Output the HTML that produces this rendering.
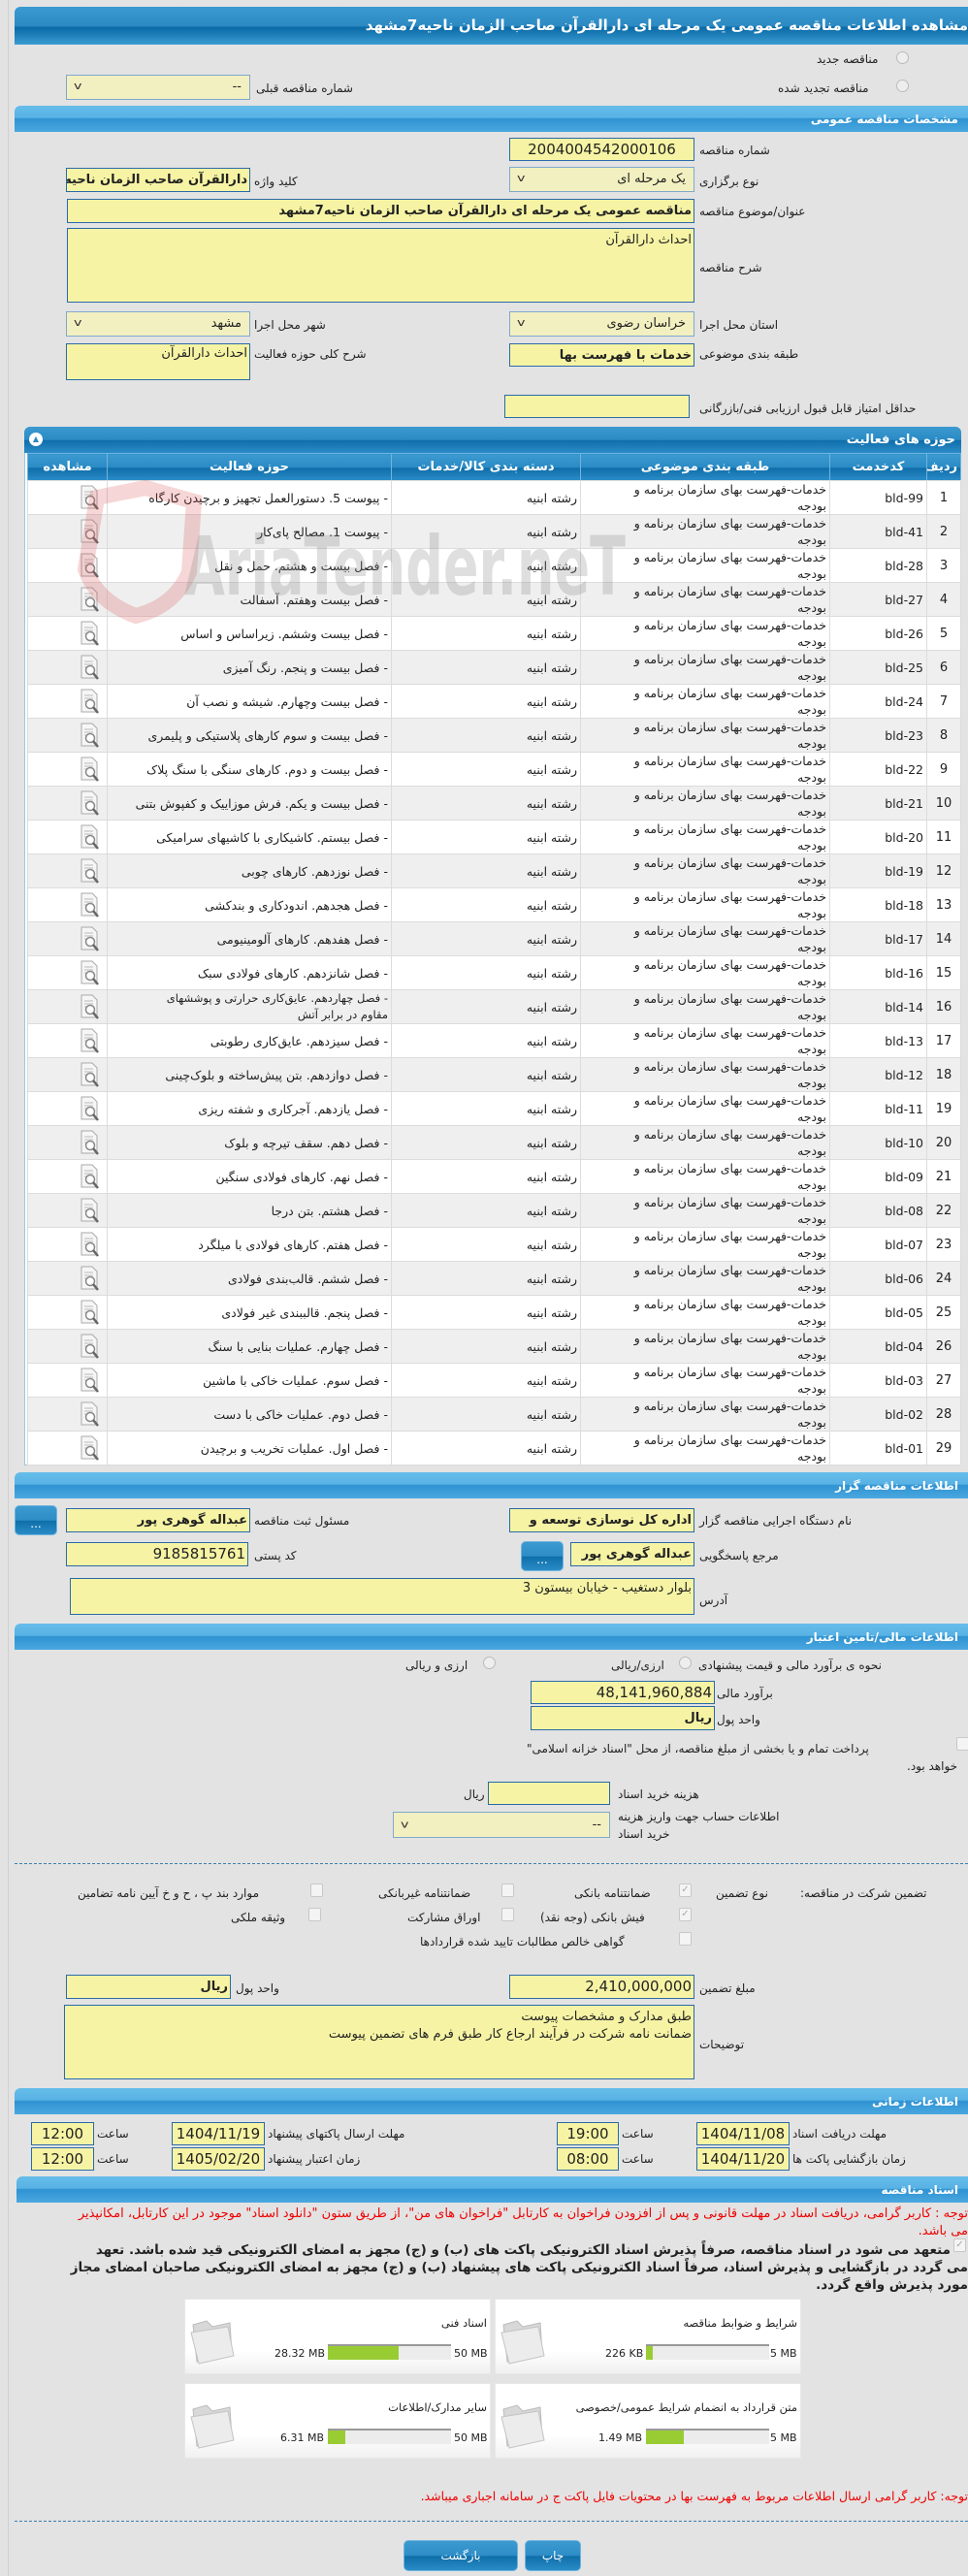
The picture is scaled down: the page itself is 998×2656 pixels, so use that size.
<!DOCTYPE html>
<html><head><meta charset="utf-8">
<style>
*{box-sizing:border-box;margin:0;padding:0}
body{width:998px;height:2656px;background:#e3e3e3;font-family:"DejaVu Sans","Liberation Sans",sans-serif;font-size:12px;color:#222;position:relative;overflow:hidden}
.a{position:absolute}
.lb{position:absolute;direction:rtl;white-space:nowrap;font-size:12px;line-height:16px}
.in{position:absolute;background:#f6f4a4;border:1px solid #2a6aa8;direction:rtl;text-align:right;white-space:nowrap;overflow:hidden;padding:0 2px;font-size:13px}
.sel{position:absolute;background:#f2f0c0;border:1px solid #7fa8cc;direction:rtl;text-align:right;white-space:nowrap;overflow:hidden;padding:0 8px;font-size:13px}
.sel:after{content:"v";position:absolute;left:8px;top:50%;transform:translateY(-55%) scaleX(1.3);font-size:11px;color:#333}
.hd{position:absolute;left:15px;width:983px;height:27px;background:linear-gradient(#66bdea 0%,#58b2e4 45%,#2f92d2 50%,#4aa8df 100%);color:#fff;font-weight:bold;font-size:12px;direction:rtl;text-align:right;padding:7px 10px 0 0;border-radius:6px 0 0 0}
.btn{position:absolute;background:linear-gradient(#3c9ad0 0%,#2e8dc6 50%,#0e6ea8 52%,#2a8cc8 100%);border:1px solid #6fb4de;border-radius:5px;color:#fff;text-align:center;font-size:12px}
.rd{position:absolute;width:13px;height:13px;border-radius:50%;border:1px solid #bbb;background:#eee}
.cb{position:absolute;width:13px;height:14px;border:1px solid #c8c8c8;background:#f4f4f4;border-radius:2px;font-size:10px;color:#aaa;line-height:12px;text-align:center}
table{border-collapse:collapse;table-layout:fixed;direction:rtl}
td,th{border:1px solid #dcdcdc;font-size:12.5px;height:35px;padding:0 3px;text-align:right;line-height:17px;overflow:hidden}
th{background:linear-gradient(#3c9ad0 0%,#2a8ac4 50%,#0f6eaa 52%,#2b8cc8 100%);color:#fff;height:28px;text-align:center;font-weight:bold;border-color:#6fb4de;font-size:13px}
tr.g td{background:#efefef}
tr.w td{background:#fff}
td.c{text-align:center;font-size:13px}
td.ic{text-align:right;padding:0 4px 0 0}
td.ic svg{display:block;margin-right:2px}
.card{position:absolute;width:316px;height:78px;background:linear-gradient(#fff 70%,#f0f0f0);border:1px solid #e8e8e8}
.bar{position:absolute;height:16px;background:#ececec;border-top:2px solid #999}
.bar i{position:absolute;left:0;top:0;bottom:0;background:#99cc33}
.sz{position:absolute;direction:ltr;white-space:nowrap;font-size:11px;line-height:16px}
.red{color:#e00;position:absolute;direction:rtl;text-align:right;font-size:13px;right:0}
</style></head><body>
<svg width="0" height="0" style="position:absolute"><defs>
<g id="mag"><path d="M4 2h11l5 5v18H4z" fill="#f6f6f6" stroke="#aaa"/><path d="M7 8h9M7 11h9M7 14h6" stroke="#bbb"/><circle cx="13" cy="17" r="4.5" fill="#fff" stroke="#888" stroke-width="1.5"/><path d="M16 20l5 6" stroke="#666" stroke-width="2.5"/></g>
<g id="fold"><path d="M6 14 L20 10 L26 16 L44 12 L46 44 L10 52 Z" fill="#d8d8d8" stroke="#bbb"/><path d="M4 22 L42 16 L48 46 L12 54 Z" fill="#ececec" stroke="#c4c4c4"/></g>
</defs></svg>
<div class="a" style="left:8px;top:0;width:1px;height:2656px;background:#cfcfcf"></div>
<div class="a" style="left:15px;top:7px;width:983px;height:39px;background:linear-gradient(#3a9ad2 0%,#2d8ac2 50%,#0a6aa6 55%,#3b9bd2 100%);border-radius:6px 0 0 0;color:#fff;font-weight:bold;font-size:15px;direction:rtl;text-align:right;padding:10px 0 0 0;white-space:nowrap">مشاهده اطلاعات مناقصه عمومی یک مرحله ای دارالقرآن صاحب الزمان ناحیه7مشهد</div>

<div class="rd" style="left:924px;top:53px"></div><div class="lb" style="left:842px;top:53px">مناقصه جدید</div>
<div class="rd" style="left:924px;top:82px"></div><div class="lb" style="left:802px;top:83px">مناقصه تجدید شده</div>
<div class="sel" style="left:68px;top:77px;width:190px;height:26px;line-height:24px">--</div><div class="lb" style="left:264px;top:83px">شماره مناقصه قبلی</div>

<div class="hd" style="top:109px">مشخصات مناقصه عمومی</div>
<div class="in" style="left:525px;top:142px;width:191px;height:24px;line-height:22px;font-size:15px;text-align:center">2004004542000106</div><div class="lb" style="left:721px;top:147px">شماره مناقصه</div>
<div class="sel" style="left:525px;top:172px;width:191px;height:26px;line-height:24px">یک مرحله ای</div><div class="lb" style="left:721px;top:179px">نوع برگزاری</div>
<div class="in" style="left:68px;top:173px;width:190px;height:25px;line-height:23px;font-weight:bold">دارالقرآن صاحب الزمان ناحیه</div><div class="lb" style="left:262px;top:179px">کلید واژه</div>
<div class="in" style="left:69px;top:205px;width:647px;height:25px;line-height:23px;font-weight:bold">مناقصه عمومی یک مرحله ای دارالقرآن صاحب الزمان ناحیه7مشهد</div><div class="lb" style="left:721px;top:210px">عنوان/موضوع مناقصه</div>
<div class="in" style="left:69px;top:235px;width:647px;height:77px;line-height:20px;padding-top:2px">احداث دارالقرآن</div><div class="lb" style="left:721px;top:268px">شرح مناقصه</div>
<div class="sel" style="left:525px;top:321px;width:191px;height:26px;line-height:24px">خراسان رضوی</div><div class="lb" style="left:721px;top:327px">استان محل اجرا</div>
<div class="sel" style="left:68px;top:321px;width:190px;height:26px;line-height:24px">مشهد</div><div class="lb" style="left:262px;top:327px">شهر محل اجرا</div>
<div class="in" style="left:525px;top:354px;width:191px;height:24px;line-height:24px;font-weight:bold">خدمات با فهرست بها</div><div class="lb" style="left:721px;top:357px">طبقه بندی موضوعی</div>
<div class="in" style="left:68px;top:354px;width:190px;height:38px;line-height:20px">احداث دارالقرآن</div><div class="lb" style="left:262px;top:357px">شرح کلی حوزه فعالیت</div>
<div class="in" style="left:520px;top:407px;width:191px;height:24px"></div><div class="lb" style="left:721px;top:413px">حداقل امتیاز قابل قبول ارزیابی فنی/بازرگانی</div>

<!-- table -->
<div class="a" style="left:25px;top:440px;width:966px;height:1071px;background:#fff;border:1px solid #9cc6e2;border-radius:6px 6px 0 0"></div>
<div class="a" style="left:25px;top:440px;width:966px;height:27px;background:linear-gradient(#3c9ad0 0%,#2a8ac4 50%,#0f6eaa 52%,#2b8cc8 100%);border-radius:6px 6px 0 0;color:#fff;font-weight:bold;direction:rtl;padding:6px 6px 0 0;font-size:13px">حوزه های فعالیت</div>
<div class="a" style="left:30px;top:446px;width:14px;height:14px;border-radius:50%;background:#fff;color:#2a8ac4;font-size:8px;text-align:center;line-height:13px">▲</div>
<table class="a" style="left:28px;top:467px;width:962px">
<colgroup><col style="width:35px"><col style="width:100px"><col style="width:257px"><col style="width:195px"><col style="width:293px"><col style="width:82px"></colgroup>
<tr><th>ردیف</th><th>کدخدمت</th><th>طبقه بندی موضوعی</th><th>دسته بندی کالا/خدمات</th><th>حوزه فعالیت</th><th>مشاهده</th></tr>
</table>
<table class="a" style="left:28px;top:495px;width:962px">
<colgroup><col style="width:35px"><col style="width:100px"><col style="width:257px"><col style="width:195px"><col style="width:293px"><col style="width:82px"></colgroup>
<tr class="w"><td class="c">1</td><td>bld-99</td><td>خدمات-فهرست بهای سازمان برنامه و<br>بودجه</td><td>رشته ابنیه</td><td>- پیوست 5. دستورالعمل تجهیز و برچیدن کارگاه</td><td class="ic"><svg width="24" height="28"><use href="#mag"/></svg></td></tr>
<tr class="g"><td class="c">2</td><td>bld-41</td><td>خدمات-فهرست بهای سازمان برنامه و<br>بودجه</td><td>رشته ابنیه</td><td>- پیوست 1. مصالح پای‌کار</td><td class="ic"><svg width="24" height="28"><use href="#mag"/></svg></td></tr>
<tr class="w"><td class="c">3</td><td>bld-28</td><td>خدمات-فهرست بهای سازمان برنامه و<br>بودجه</td><td>رشته ابنیه</td><td>- فصل بیست و هشتم. حمل و نقل</td><td class="ic"><svg width="24" height="28"><use href="#mag"/></svg></td></tr>
<tr class="g"><td class="c">4</td><td>bld-27</td><td>خدمات-فهرست بهای سازمان برنامه و<br>بودجه</td><td>رشته ابنیه</td><td>- فصل بیست وهفتم. آسفالت</td><td class="ic"><svg width="24" height="28"><use href="#mag"/></svg></td></tr>
<tr class="w"><td class="c">5</td><td>bld-26</td><td>خدمات-فهرست بهای سازمان برنامه و<br>بودجه</td><td>رشته ابنیه</td><td>- فصل بیست وششم. زیراساس و اساس</td><td class="ic"><svg width="24" height="28"><use href="#mag"/></svg></td></tr>
<tr class="g"><td class="c">6</td><td>bld-25</td><td>خدمات-فهرست بهای سازمان برنامه و<br>بودجه</td><td>رشته ابنیه</td><td>- فصل بیست و پنجم. رنگ آمیزی</td><td class="ic"><svg width="24" height="28"><use href="#mag"/></svg></td></tr>
<tr class="w"><td class="c">7</td><td>bld-24</td><td>خدمات-فهرست بهای سازمان برنامه و<br>بودجه</td><td>رشته ابنیه</td><td>- فصل بیست وچهارم. شیشه و نصب آن</td><td class="ic"><svg width="24" height="28"><use href="#mag"/></svg></td></tr>
<tr class="g"><td class="c">8</td><td>bld-23</td><td>خدمات-فهرست بهای سازمان برنامه و<br>بودجه</td><td>رشته ابنیه</td><td>- فصل بیست و سوم کارهای پلاستیکی و پلیمری</td><td class="ic"><svg width="24" height="28"><use href="#mag"/></svg></td></tr>
<tr class="w"><td class="c">9</td><td>bld-22</td><td>خدمات-فهرست بهای سازمان برنامه و<br>بودجه</td><td>رشته ابنیه</td><td>- فصل بیست و دوم. کارهای سنگی با سنگ پلاک</td><td class="ic"><svg width="24" height="28"><use href="#mag"/></svg></td></tr>
<tr class="g"><td class="c">10</td><td>bld-21</td><td>خدمات-فهرست بهای سازمان برنامه و<br>بودجه</td><td>رشته ابنیه</td><td>- فصل بیست و یکم. فرش موزاییک و کفپوش بتنی</td><td class="ic"><svg width="24" height="28"><use href="#mag"/></svg></td></tr>
<tr class="w"><td class="c">11</td><td>bld-20</td><td>خدمات-فهرست بهای سازمان برنامه و<br>بودجه</td><td>رشته ابنیه</td><td>- فصل بیستم. کاشیکاری با کاشیهای سرامیکی</td><td class="ic"><svg width="24" height="28"><use href="#mag"/></svg></td></tr>
<tr class="g"><td class="c">12</td><td>bld-19</td><td>خدمات-فهرست بهای سازمان برنامه و<br>بودجه</td><td>رشته ابنیه</td><td>- فصل نوزدهم. کارهای چوبی</td><td class="ic"><svg width="24" height="28"><use href="#mag"/></svg></td></tr>
<tr class="w"><td class="c">13</td><td>bld-18</td><td>خدمات-فهرست بهای سازمان برنامه و<br>بودجه</td><td>رشته ابنیه</td><td>- فصل هجدهم. اندودکاری و بندکشی</td><td class="ic"><svg width="24" height="28"><use href="#mag"/></svg></td></tr>
<tr class="g"><td class="c">14</td><td>bld-17</td><td>خدمات-فهرست بهای سازمان برنامه و<br>بودجه</td><td>رشته ابنیه</td><td>- فصل هفدهم. کارهای آلومینیومی</td><td class="ic"><svg width="24" height="28"><use href="#mag"/></svg></td></tr>
<tr class="w"><td class="c">15</td><td>bld-16</td><td>خدمات-فهرست بهای سازمان برنامه و<br>بودجه</td><td>رشته ابنیه</td><td>- فصل شانزدهم. کارهای فولادی سبک</td><td class="ic"><svg width="24" height="28"><use href="#mag"/></svg></td></tr>
<tr class="g"><td class="c">16</td><td>bld-14</td><td>خدمات-فهرست بهای سازمان برنامه و<br>بودجه</td><td>رشته ابنیه</td><td style="font-size:11.5px">- فصل چهاردهم. عایق‌کاری حرارتی و پوششهای<br>مقاوم در برابر آتش</td><td class="ic"><svg width="24" height="28"><use href="#mag"/></svg></td></tr>
<tr class="w"><td class="c">17</td><td>bld-13</td><td>خدمات-فهرست بهای سازمان برنامه و<br>بودجه</td><td>رشته ابنیه</td><td>- فصل سیزدهم. عایق‌کاری رطوبتی</td><td class="ic"><svg width="24" height="28"><use href="#mag"/></svg></td></tr>
<tr class="g"><td class="c">18</td><td>bld-12</td><td>خدمات-فهرست بهای سازمان برنامه و<br>بودجه</td><td>رشته ابنیه</td><td>- فصل دوازدهم. بتن پیش‌ساخته و بلوک‌چینی</td><td class="ic"><svg width="24" height="28"><use href="#mag"/></svg></td></tr>
<tr class="w"><td class="c">19</td><td>bld-11</td><td>خدمات-فهرست بهای سازمان برنامه و<br>بودجه</td><td>رشته ابنیه</td><td>- فصل یازدهم. آجرکاری و شفته ریزی</td><td class="ic"><svg width="24" height="28"><use href="#mag"/></svg></td></tr>
<tr class="g"><td class="c">20</td><td>bld-10</td><td>خدمات-فهرست بهای سازمان برنامه و<br>بودجه</td><td>رشته ابنیه</td><td>- فصل دهم. سقف تیرچه و بلوک</td><td class="ic"><svg width="24" height="28"><use href="#mag"/></svg></td></tr>
<tr class="w"><td class="c">21</td><td>bld-09</td><td>خدمات-فهرست بهای سازمان برنامه و<br>بودجه</td><td>رشته ابنیه</td><td>- فصل نهم. کارهای فولادی سنگین</td><td class="ic"><svg width="24" height="28"><use href="#mag"/></svg></td></tr>
<tr class="g"><td class="c">22</td><td>bld-08</td><td>خدمات-فهرست بهای سازمان برنامه و<br>بودجه</td><td>رشته ابنیه</td><td>- فصل هشتم. بتن درجا</td><td class="ic"><svg width="24" height="28"><use href="#mag"/></svg></td></tr>
<tr class="w"><td class="c">23</td><td>bld-07</td><td>خدمات-فهرست بهای سازمان برنامه و<br>بودجه</td><td>رشته ابنیه</td><td>- فصل هفتم. کارهای فولادی با میلگرد</td><td class="ic"><svg width="24" height="28"><use href="#mag"/></svg></td></tr>
<tr class="g"><td class="c">24</td><td>bld-06</td><td>خدمات-فهرست بهای سازمان برنامه و<br>بودجه</td><td>رشته ابنیه</td><td>- فصل ششم. قالب‌بندی فولادی</td><td class="ic"><svg width="24" height="28"><use href="#mag"/></svg></td></tr>
<tr class="w"><td class="c">25</td><td>bld-05</td><td>خدمات-فهرست بهای سازمان برنامه و<br>بودجه</td><td>رشته ابنیه</td><td>- فصل پنجم. قالببندی غیر فولادی</td><td class="ic"><svg width="24" height="28"><use href="#mag"/></svg></td></tr>
<tr class="g"><td class="c">26</td><td>bld-04</td><td>خدمات-فهرست بهای سازمان برنامه و<br>بودجه</td><td>رشته ابنیه</td><td>- فصل چهارم. عملیات بنایی با سنگ</td><td class="ic"><svg width="24" height="28"><use href="#mag"/></svg></td></tr>
<tr class="w"><td class="c">27</td><td>bld-03</td><td>خدمات-فهرست بهای سازمان برنامه و<br>بودجه</td><td>رشته ابنیه</td><td>- فصل سوم. عملیات خاکی با ماشین</td><td class="ic"><svg width="24" height="28"><use href="#mag"/></svg></td></tr>
<tr class="g"><td class="c">28</td><td>bld-02</td><td>خدمات-فهرست بهای سازمان برنامه و<br>بودجه</td><td>رشته ابنیه</td><td>- فصل دوم. عملیات خاکی با دست</td><td class="ic"><svg width="24" height="28"><use href="#mag"/></svg></td></tr>
<tr class="w"><td class="c">29</td><td>bld-01</td><td>خدمات-فهرست بهای سازمان برنامه و<br>بودجه</td><td>رشته ابنیه</td><td>- فصل اول. عملیات تخریب و برچیدن</td><td class="ic"><svg width="24" height="28"><use href="#mag"/></svg></td></tr>
</table>
<svg class="a" style="left:40px;top:495px" width="660" height="150" viewBox="0 0 660 150">
<path d="M60 18 L110 8 L160 22 L155 95 Q140 130 100 140 Q60 125 48 92 Z" fill="none" stroke="rgba(215,70,70,0.22)" stroke-width="16"/>
<text x="150" y="118" font-family="DejaVu Sans" font-weight="bold" font-size="84" textLength="455" lengthAdjust="spacingAndGlyphs" fill="rgba(140,140,140,0.28)">AriaTender.neT</text>
</svg>

<!-- section 2 -->
<div class="hd" style="top:1518px">اطلاعات مناقصه گزار</div>
<div class="in" style="left:525px;top:1555px;width:191px;height:25px;line-height:23px;font-weight:bold">اداره کل نوسازی  توسعه و</div><div class="lb" style="left:721px;top:1560px">نام دستگاه اجرایی مناقصه گزار</div>
<div class="in" style="left:68px;top:1555px;width:190px;height:25px;line-height:23px;font-weight:bold">عبداله گوهری پور</div><div class="lb" style="left:262px;top:1560px">مسئول ثبت مناقصه</div>
<div class="btn" style="left:15px;top:1552px;width:44px;height:31px;line-height:36px">...</div>
<div class="in" style="left:588px;top:1590px;width:128px;height:25px;line-height:23px;font-weight:bold">عبداله گوهری پور</div><div class="lb" style="left:721px;top:1596px">مرجع پاسخگویی</div>
<div class="btn" style="left:537px;top:1589px;width:44px;height:31px;line-height:36px">...</div>
<div class="in" style="left:68px;top:1590px;width:188px;height:25px;line-height:23px;font-size:15px">9185815761</div><div class="lb" style="left:262px;top:1596px">کد پستی</div>
<div class="in" style="left:72px;top:1627px;width:644px;height:38px;line-height:20px">بلوار دستغیب - خیابان بیستون 3</div><div class="lb" style="left:721px;top:1642px">آدرس</div>

<!-- section 3 -->
<div class="hd" style="top:1674px">اطلاعات مالی/تامین اعتبار</div>
<div class="lb" style="left:720px;top:1709px">نحوه ی برآورد مالی و قیمت پیشنهادی</div>
<div class="rd" style="left:700px;top:1708px"></div><div class="lb" style="left:630px;top:1709px">ارزی/ریالی</div>
<div class="rd" style="left:498px;top:1708px"></div><div class="lb" style="left:418px;top:1709px">ارزی و ریالی</div>
<div class="in" style="left:547px;top:1733px;width:190px;height:24px;line-height:22px;font-size:15px">48,141,960,884</div><div class="lb" style="left:739px;top:1738px">برآورد مالی</div>
<div class="in" style="left:547px;top:1759px;width:190px;height:25px;line-height:23px;font-weight:bold">ریال</div><div class="lb" style="left:739px;top:1765px">واحد پول</div>
<div class="cb" style="left:986px;top:1791px"></div>
<div class="lb" style="left:543px;top:1795px">پرداخت تمام و یا بخشی از مبلغ مناقصه، از محل "اسناد خزانه اسلامی"</div>
<div class="lb" style="left:935px;top:1813px">خواهد بود.</div>
<div class="in" style="left:503px;top:1837px;width:126px;height:24px"></div><div class="lb" style="left:637px;top:1842px">هزینه خرید اسناد</div><div class="lb" style="left:478px;top:1842px">ریال</div>
<div class="sel" style="left:405px;top:1868px;width:224px;height:27px;line-height:25px">--</div>
<div class="lb" style="left:637px;top:1865px">اطلاعات حساب جهت واریز هزینه</div><div class="lb" style="left:637px;top:1883px">خرید اسناد</div>
<div class="a" style="left:15px;top:1921px;width:983px;border-top:1px dashed #3a7fb0"></div>
<div class="lb" style="left:825px;top:1944px">تضمین شرکت در مناقصه:</div><div class="lb" style="left:738px;top:1944px">نوع تضمین</div>
<div class="cb" style="left:700px;top:1942px">✓</div><div class="lb" style="left:592px;top:1944px">ضمانتنامه بانکی</div>
<div class="cb" style="left:517px;top:1942px"></div><div class="lb" style="left:390px;top:1944px">ضمانتنامه غیربانکی</div>
<div class="cb" style="left:320px;top:1942px"></div><div class="lb" style="left:80px;top:1944px">موارد بند پ ، ح و خ آیین نامه تضامین</div>
<div class="cb" style="left:700px;top:1967px">✓</div><div class="lb" style="left:557px;top:1969px">فیش بانکی (وجه نقد)</div>
<div class="cb" style="left:517px;top:1967px"></div><div class="lb" style="left:420px;top:1969px">اوراق مشارکت</div>
<div class="cb" style="left:318px;top:1967px"></div><div class="lb" style="left:238px;top:1969px">وثیقه ملکی</div>
<div class="cb" style="left:700px;top:1992px"></div><div class="lb" style="left:433px;top:1994px">گواهی خالص مطالبات تایید شده قراردادها</div>
<div class="in" style="left:525px;top:2036px;width:191px;height:25px;line-height:23px;font-size:15px">2,410,000,000</div><div class="lb" style="left:721px;top:2042px">مبلغ تضمین</div>
<div class="in" style="left:68px;top:2036px;width:170px;height:25px;line-height:23px;font-weight:bold">ریال</div><div class="lb" style="left:243px;top:2042px">واحد پول</div>
<div class="in" style="left:66px;top:2067px;width:650px;height:77px;line-height:18px;padding-top:3px">طبق مدارک و مشخصات پیوست<br>ضمانت نامه شرکت در فرآیند ارجاع کار طبق فرم های تضمین پیوست</div>
<div class="lb" style="left:721px;top:2100px">توضیحات</div>

<!-- time -->
<div class="hd" style="top:2153px">اطلاعات زمانی</div>
<div class="in" style="left:718px;top:2188px;width:96px;height:24px;line-height:22px;font-size:15px;text-align:center">1404/11/08</div><div class="lb" style="left:817px;top:2192px">مهلت دریافت اسناد</div>
<div class="in" style="left:574px;top:2188px;width:64px;height:24px;line-height:22px;font-size:15px;text-align:center">19:00</div><div class="lb" style="left:641px;top:2192px">ساعت</div>
<div class="in" style="left:177px;top:2188px;width:96px;height:24px;line-height:22px;font-size:15px;text-align:center">1404/11/19</div><div class="lb" style="left:276px;top:2192px">مهلت ارسال پاکتهای پیشنهاد</div>
<div class="in" style="left:32px;top:2188px;width:65px;height:24px;line-height:22px;font-size:15px;text-align:center">12:00</div><div class="lb" style="left:100px;top:2192px">ساعت</div>
<div class="in" style="left:718px;top:2214px;width:96px;height:24px;line-height:22px;font-size:15px;text-align:center">1404/11/20</div><div class="lb" style="left:817px;top:2218px">زمان بازگشایی پاکت ها</div>
<div class="in" style="left:574px;top:2214px;width:64px;height:24px;line-height:22px;font-size:15px;text-align:center">08:00</div><div class="lb" style="left:641px;top:2218px">ساعت</div>
<div class="in" style="left:177px;top:2214px;width:96px;height:24px;line-height:22px;font-size:15px;text-align:center">1405/02/20</div><div class="lb" style="left:276px;top:2218px">زمان اعتبار پیشنهاد</div>
<div class="in" style="left:32px;top:2214px;width:65px;height:24px;line-height:22px;font-size:15px;text-align:center">12:00</div><div class="lb" style="left:100px;top:2218px">ساعت</div>

<!-- docs -->
<div class="hd" style="top:2244px;left:17px;width:981px">اسناد مناقصه</div>
<div class="red" style="top:2274px;width:930px;line-height:18px;font-size:13px">توجه : کاربر گرامی، دریافت اسناد در مهلت قانونی و پس از افزودن فراخوان به کارتابل "فراخوان های من"، از طریق ستون "دانلود اسناد" موجود در این کارتابل، امکانپذیر می باشد.</div>
<div class="cb" style="left:983px;top:2308px">✓</div>
<div class="a" style="right:18px;top:2312px;direction:rtl;font-weight:bold;font-size:13.5px;white-space:nowrap">متعهد می شود در اسناد مناقصه، صرفاً پذیرش اسناد الکترونیکی پاکت های (ب) و (ج) مجهز به امضای الکترونیکی قید شده باشد. تعهد</div>
<div class="a" style="right:0;top:2330px;direction:rtl;font-weight:bold;font-size:13.5px;white-space:nowrap">می گردد در بازگشایی و پذیرش اسناد، صرفاً اسناد الکترونیکی پاکت های پیشنهاد (ب) و (ج) مجهز به امضای الکترونیکی صاحبان امضای مجاز</div>
<div class="a" style="right:0;top:2348px;direction:rtl;font-weight:bold;font-size:13.5px;white-space:nowrap">مورد پذیرش واقع گردد.</div>

<div class="card" style="left:510px;top:2370px"><svg class="a" style="left:2px;top:12px" width="55" height="58"><use href="#fold"/></svg><div class="lb" style="right:3px;top:16px;font-size:11.5px">شرایط و ضوابط مناقصه</div><div class="sz" style="left:283px;top:48px">5 MB</div><div class="bar" style="left:155px;top:46px;width:127px"><i style="width:7px"></i></div><div class="sz" style="left:113px;top:48px">226 KB</div></div>
<div class="card" style="left:190px;top:2370px"><svg class="a" style="left:2px;top:12px" width="55" height="58"><use href="#fold"/></svg><div class="lb" style="right:3px;top:16px;font-size:11.5px">اسناد فنی</div><div class="sz" style="left:277px;top:48px">50 MB</div><div class="bar" style="left:147px;top:46px;width:127px"><i style="width:73px"></i></div><div class="sz" style="left:92px;top:48px">28.32 MB</div></div>
<div class="card" style="left:510px;top:2457px"><svg class="a" style="left:2px;top:12px" width="55" height="58"><use href="#fold"/></svg><div class="lb" style="right:3px;top:16px;font-size:11.5px">متن قرارداد به انضمام شرایط عمومی/خصوصی</div><div class="sz" style="left:283px;top:48px">5 MB</div><div class="bar" style="left:155px;top:46px;width:127px"><i style="width:39px"></i></div><div class="sz" style="left:106px;top:48px">1.49 MB</div></div>
<div class="card" style="left:190px;top:2457px"><svg class="a" style="left:2px;top:12px" width="55" height="58"><use href="#fold"/></svg><div class="lb" style="right:3px;top:16px;font-size:11.5px">سایر مدارک/اطلاعات</div><div class="sz" style="left:277px;top:48px">50 MB</div><div class="bar" style="left:147px;top:46px;width:127px"><i style="width:18px"></i></div><div class="sz" style="left:98px;top:48px">6.31 MB</div></div>

<div class="red" style="top:2566px;white-space:nowrap;font-size:12.5px">توجه: کاربر گرامی ارسال اطلاعات مربوط به فهرست بها در محتویات فایل پاکت ج در سامانه اجباری میباشد.</div>
<div class="a" style="left:15px;top:2599px;width:983px;border-top:1px dashed #3a7fb0"></div>
<div class="btn" style="left:416px;top:2619px;width:118px;height:32px;line-height:30px">بازگشت</div>
<div class="btn" style="left:541px;top:2619px;width:58px;height:32px;line-height:30px">چاپ</div>
</body></html>
